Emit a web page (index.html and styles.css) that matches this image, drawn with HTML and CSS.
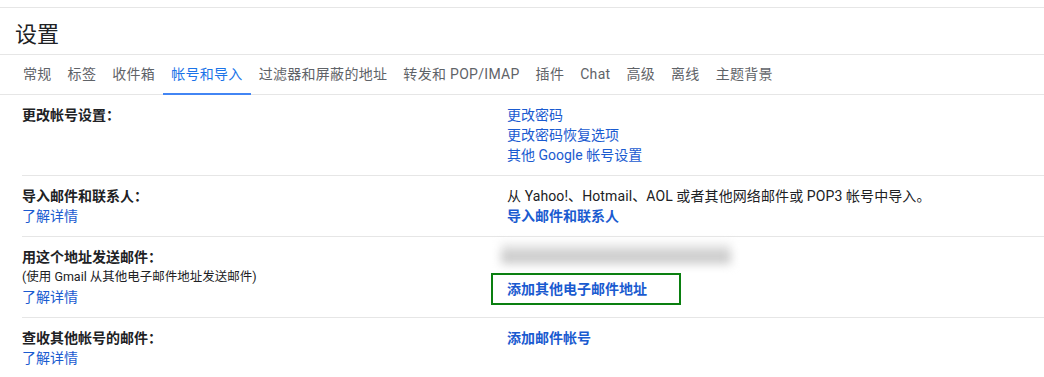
FILE: index.html
```html
<!DOCTYPE html>
<html lang="zh-CN">
<head>
    <meta charset="UTF-8">
    <title>设置</title>
    <link rel="stylesheet" href="styles.css">
</head>
<body>
    <div class="settings">
        <h1 class="title">设置</h1>

        <div class="tabs">
            <span class="tab">常规</span>
            <span class="tab">标签</span>
            <span class="tab">收件箱</span>
            <span class="tab active">帐号和导入</span>
            <span class="tab">过滤器和屏蔽的地址</span>
            <span class="tab">转发和 POP/IMAP</span>
            <span class="tab">插件</span>
            <span class="tab">Chat</span>
            <span class="tab">高级</span>
            <span class="tab">离线</span>
            <span class="tab">主题背景</span>
        </div>

        <div class="rows">
            <div class="row">
                <div class="label">
                    <b>更改帐号设置：</b>
                </div>
                <div class="value">
                    <a href="#">更改密码</a>
                    <a href="#">更改密码恢复选项</a>
                    <a href="#">其他 Google 帐号设置</a>
                </div>
            </div>

            <div class="row">
                <div class="label">
                    <b>导入邮件和联系人：</b>
                    <a href="#">了解详情</a>
                </div>
                <div class="value">
                    <span>从 Yahoo!、Hotmail、AOL 或者其他网络邮件或 POP3 帐号中导入。</span>
                    <a href="#" class="strong">导入邮件和联系人</a>
                </div>
            </div>

            <div class="row">
                <div class="label">
                    <b>用这个地址发送邮件：</b>
                    <span class="note">(使用 Gmail 从其他电子邮件地址发送邮件)</span>
                    <a href="#">了解详情</a>
                </div>
                <div class="value">
                    <div class="blurred"></div>
                    <div class="focus-box">
                        <a href="#" class="strong">添加其他电子邮件地址</a>
                    </div>
                </div>
            </div>

            <div class="row">
                <div class="label">
                    <b>查收其他帐号的邮件：</b>
                    <a href="#">了解详情</a>
                </div>
                <div class="value">
                    <a href="#" class="strong">添加邮件帐号</a>
                </div>
            </div>
        </div>
    </div>
</body>
</html>
```

FILE: styles.css
```css
body {
    margin: 0;
    background: #fff;
    font-family: Roboto, "Noto Sans CJK SC", sans-serif;
    color: #202124;
}
a {
    color: #1a5bd0;
    text-decoration: none;
}
.settings {
    margin-top: 7px;
    border-top: 1px solid #e6e6e6;
}
.title {
    margin: 0;
    height: 47px;
    box-sizing: border-box;
    padding: 7px 0 0 15px;
    font-size: 22px;
    font-weight: normal;
    line-height: 39px;
    border-bottom: 1px solid #e6e6e6;
}
.tabs {
    display: flex;
    padding-left: 15px;
    border-bottom: 1px solid #e6e6e6;
}
.tab {
    height: 40px;
    margin-bottom: -1px;
    padding: 0 8px 2px;
    box-sizing: border-box;
    font-size: 14px;
    line-height: 38px;
    letter-spacing: 0.3px;
    color: #5f6368;
    white-space: nowrap;
}
.tab.active {
    color: #1a73e8;
    box-shadow: inset 0 -2px #4285f4;
}
.rows {
    margin-left: 22px;
}
.row {
    display: grid;
    grid-template-columns: 485px 1fr;
    padding: 10px 0;
    border-top: 1px solid #e6e6e6;
    font-size: 14px;
    line-height: 20px;
}
.row:first-child {
    border-top: none;
}
.label,
.value {
    display: flex;
    flex-direction: column;
    align-items: flex-start;
}
.label b {
    font-weight: bold;
    color: #202124;
}
.note {
    font-size: 12.5px;
    color: #202124;
}
.strong {
    font-weight: bold;
}
.value span {
    letter-spacing: 0.1px;
}
.blurred {
    width: 230px;
    height: 20px;
    margin: -3px 0 0 -6px;
    background: linear-gradient(#e4e4e4 0, #e4e4e4 30%, #c8c8c8 50%, #cfcfcf 100%);
    filter: blur(5px);
}
.focus-box {
    margin: 9px 0 1px -16px;
    width: 190px;
    height: 32px;
    box-sizing: border-box;
    padding-left: 14px;
    border: 2px solid #0a7f10;
    line-height: 28px;
}
```
